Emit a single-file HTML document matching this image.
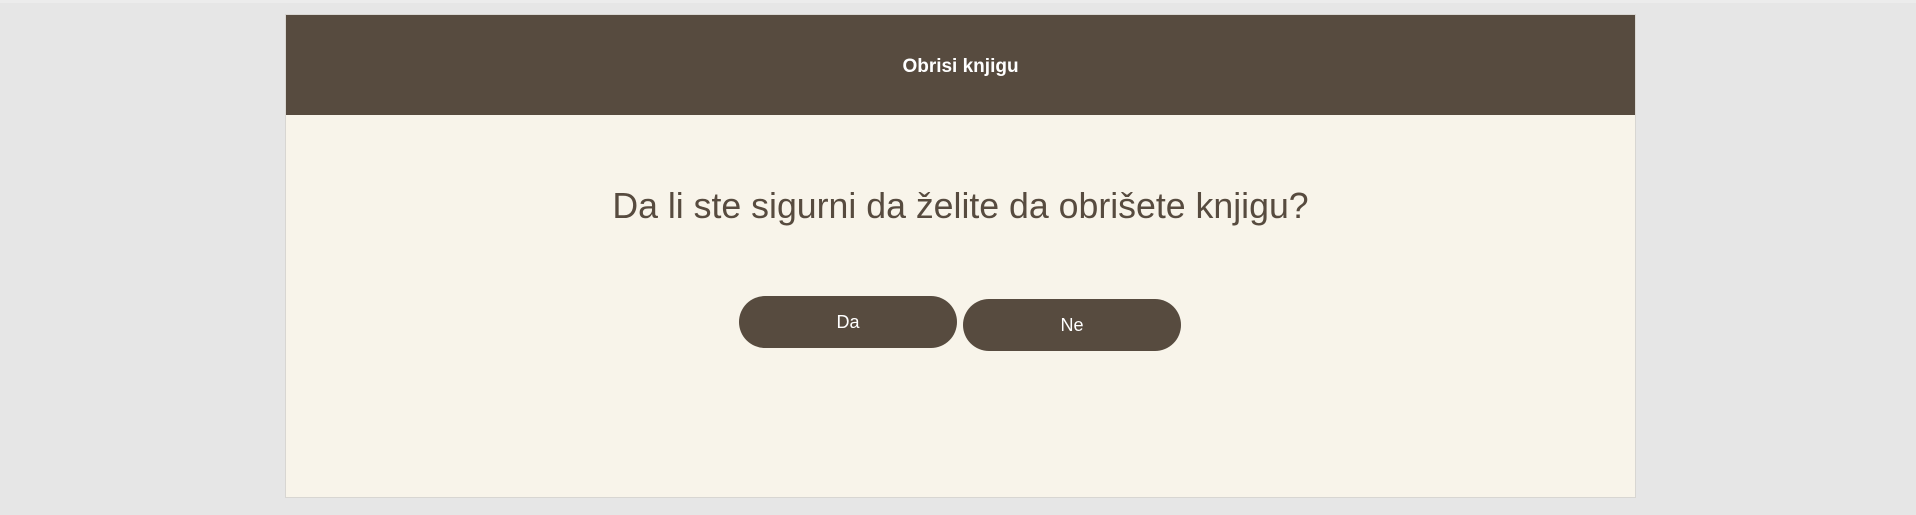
<!DOCTYPE html>
<html><head><meta charset="utf-8"><style>
html,body{margin:0;padding:0;}
body{width:1916px;height:515px;background:#e6e6e6;position:relative;overflow:hidden;font-family:"Liberation Sans",sans-serif;}
.top{position:absolute;left:0;top:0;width:1916px;height:3px;background:#ececec;}
.card{position:absolute;left:285px;top:14px;width:1351px;height:484px;background:#f8f4ea;border:1px solid #d8d6d2;box-sizing:border-box;}
.hdr{position:absolute;left:0;top:0;width:100%;height:100px;background:#574b3f;color:#fff;font-weight:bold;font-size:19px;text-align:center;line-height:104px;}
.q{position:absolute;left:0;top:171px;width:100%;text-align:center;color:#574b3f;font-size:35.7px;line-height:40px;}
.btn{position:absolute;width:218px;height:52px;border-radius:26px;background:#574b3f;color:#fff;font-size:18px;text-align:center;line-height:52px;}
</style></head><body>
<div class="top"></div>
<div class="card">
<div class="hdr">Obrisi knjigu</div>
<div class="q">Da li ste sigurni da želite da obrišete knjigu?</div>
<div class="btn" style="left:453px;top:281px;">Da</div>
<div class="btn" style="left:677px;top:284px;">Ne</div>
</div>
</body></html>
